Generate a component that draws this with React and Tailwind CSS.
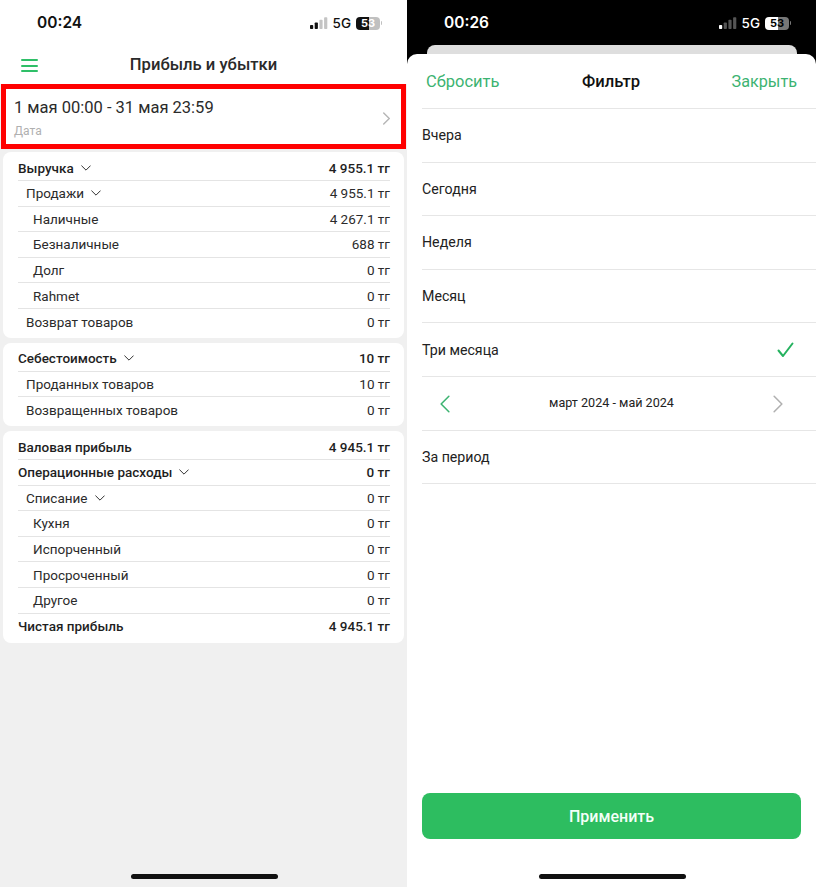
const revenue = [
    { label: 'Выручка', value: '4 955.1 тг', level: 0, bold: true, open: true },
    { label: 'Продажи', value: '4 955.1 тг', level: 1, open: true },
    { label: 'Наличные', value: '4 267.1 тг', level: 2 },
    { label: 'Безналичные', value: '688 тг', level: 2 },
    { label: 'Долг', value: '0 тг', level: 2 },
    { label: 'Rahmet', value: '0 тг', level: 2 },
    { label: 'Возврат товаров', value: '0 тг', level: 1 },
];

const cost = [
    { label: 'Себестоимость', value: '10 тг', level: 0, bold: true, open: true },
    { label: 'Проданных товаров', value: '10 тг', level: 1 },
    { label: 'Возвращенных товаров', value: '0 тг', level: 1 },
];

const profit = [
    { label: 'Валовая прибыль', value: '4 945.1 тг', level: 0, bold: true },
    { label: 'Операционные расходы', value: '0 тг', level: 0, bold: true, open: true },
    { label: 'Списание', value: '0 тг', level: 1, open: true },
    { label: 'Кухня', value: '0 тг', level: 2 },
    { label: 'Испорченный', value: '0 тг', level: 2 },
    { label: 'Просроченный', value: '0 тг', level: 2 },
    { label: 'Другое', value: '0 тг', level: 2 },
    { label: 'Чистая прибыль', value: '4 945.1 тг', level: 0, bold: true },
];

const filters = ['Вчера', 'Сегодня', 'Неделя', 'Месяц'];

function Signal({ on, off, active }) {
    return (
        <svg width="18" height="12" viewBox="0 0 18 12">
            {[0, 1, 2, 3].map((i) => (
                <rect key={i} x={i * 4.7} y={8 - i * 2.6} width="3.2" height={4 + i * 2.6} rx="0.8" fill={i < active ? on : off} />
            ))}
        </svg>
    );
}

function StatusBar({ time, dark }) {
    return (
        <div className={`flex items-center h-[45px] pt-px pl-[37px] pr-[25px] font-['Inter',sans-serif] ${dark ? 'text-white' : 'text-[#111]'}`}>
            <span className="text-[15.5px] font-semibold">{time}</span>
            <div className="ml-auto flex items-center">
                {dark ? <Signal on="#fff" off="#555" active={1} /> : <Signal on="#111" off="#c4c4c4" active={2} />}
                <span className="ml-[5px] text-[13.5px] font-medium">5G</span>
                <div
                    className={`ml-[5px] w-[24px] h-[13px] rounded-[4px] flex items-center justify-center text-[11px] font-bold leading-none ${
                        dark
                            ? 'text-black bg-[linear-gradient(to_right,#fff_55%,#777_55%)]'
                            : 'text-white bg-[linear-gradient(to_right,#111_55%,#c0c0c0_55%)]'
                    }`}
                >
                    53
                </div>
                <div className={`ml-px w-px h-[4px] rounded-r ${dark ? 'bg-[#777]' : 'bg-[#c0c0c0]'}`} />
            </div>
        </div>
    );
}

function Chevron({ dir = 'right', color = '#b5b5b5', size = 14, stroke = 1.5 }) {
    const paths = {
        right: 'M4 1l6 6-6 6',
        left: 'M10 1L4 7l6 6',
        down: 'M1 4l6 6 6-6',
    };
    return (
        <svg width={size} height={size} viewBox="0 0 14 14" fill="none" stroke={color} strokeWidth={stroke} strokeLinecap="round" strokeLinejoin="round">
            <path d={paths[dir]} />
        </svg>
    );
}

function ReportCard({ rows }) {
    const indent = ['pl-0', 'pl-2', 'pl-[15px]'];
    return (
        <div className="mx-[3px] mb-[4.5px] bg-white rounded-lg pl-[15px] pr-[14px] py-[3.5px]">
            {rows.map((row, i) => (
                <div
                    key={row.label}
                    className={`h-[25.6px] flex items-center text-[13.5px] ${indent[row.level]} ${
                        i < rows.length - 1 ? 'border-b border-[#e4e4e4]' : ''
                    } ${row.bold ? 'font-medium text-[#1f1f1f]' : 'text-[#2b2b2b]'}`}
                >
                    <span>{row.label}</span>
                    {row.open && (
                        <span className="ml-[7px]">
                            <Chevron dir="down" color="#333" size={10} stroke={1.4} />
                        </span>
                    )}
                    <span className="ml-auto">{row.value}</span>
                </div>
            ))}
        </div>
    );
}

function HomeBar() {
    return <div className="w-[147px] h-[5px] rounded-full bg-[#111]" />;
}

export default function App() {
    return (
        <div className="flex w-[816px] h-[887px] bg-white font-['Roboto',sans-serif] overflow-hidden">
            <div className="w-[407px] h-full flex flex-col bg-[#f0f0f0]">
                <div className="bg-white">
                    <StatusBar time="00:24" />
                    <div className="relative h-[39px] pt-[2px] flex items-center justify-center">
                        <div className="absolute left-[21px] top-[14px] flex flex-col gap-[3.5px]">
                            <div className="w-[17px] h-[2px] rounded bg-[#2fbf68]" />
                            <div className="w-[17px] h-[2px] rounded bg-[#2fbf68]" />
                            <div className="w-[17px] h-[2px] rounded bg-[#2fbf68]" />
                        </div>
                        <span className="text-[16.6px] font-medium text-[#2a2a2a]">Прибыль и убытки</span>
                    </div>
                </div>

                <div className="mx-px mb-[3px] h-[65px] pt-[3px] border-[5px] border-[#ff0000] bg-white flex items-center pl-[8px] pr-[8px]">
                    <div className="flex-1">
                        <div className="text-[16.5px] leading-[20px] text-[#2b2b2b]">1 мая 00:00 - 31 мая 23:59</div>
                        <div className="mt-[6px] text-[12px] leading-[14px] text-[#b0b0b0]">Дата</div>
                    </div>
                    <Chevron size={13} />
                </div>

                <ReportCard rows={revenue} />
                <ReportCard rows={cost} />
                <ReportCard rows={profit} />

                <div className="mt-auto mb-[8px] ml-px flex justify-center">
                    <HomeBar />
                </div>
            </div>

            <div className="w-[409px] h-full flex flex-col bg-black">
                <StatusBar time="00:26" dark />
                <div className="ml-[20px] mr-[19px] h-[9px] rounded-t-lg bg-[#dedede]" />
                <div className="flex-1 flex flex-col bg-white rounded-t-[10px] pl-[15px]">
                    <div className="h-[55px] pt-[2px] flex items-center justify-between border-b border-[#e6e6e6] pl-[4px] pr-[19px]">
                        <span className="text-[16.5px] text-[#3cb371]">Сбросить</span>
                        <span className="mr-[9px] text-[16.6px] font-medium text-[#111]">Фильтр</span>
                        <span className="text-[16.2px] text-[#3cb371]">Закрыть</span>
                    </div>

                    {filters.map((name) => (
                        <div key={name} className="h-[53.6px] pt-px flex items-center border-b border-[#e6e6e6] text-[14.2px] text-[#222]">
                            {name}
                        </div>
                    ))}

                    <div className="h-[53.6px] pt-px flex items-center justify-between border-b border-[#e6e6e6] pr-[22px] text-[14.2px] text-[#222]">
                        <span>Три месяца</span>
                        <svg width="17" height="16" viewBox="0 0 17 16" fill="none" stroke="#25b25f" strokeWidth="2" strokeLinecap="round" strokeLinejoin="round">
                            <path d="M1.5 8.5l4.5 5.5L15.5 1.5" />
                        </svg>
                    </div>

                    <div className="h-[53.6px] pt-px flex items-center justify-between border-b border-[#e6e6e6] pl-[14px] pr-[29px] text-[12.6px] text-[#222]">
                        <Chevron dir="left" color="#3cb371" size={18} stroke={1.2} />
                        <span>март 2024 - май 2024</span>
                        <Chevron dir="right" color="#b0b0b0" size={18} stroke={1.2} />
                    </div>

                    <div className="h-[53.6px] pt-px flex items-center border-b border-[#e6e6e6] text-[14.2px] text-[#222]">За период</div>

                    <div className="mt-auto mr-[15px] h-[46px] pt-px rounded-lg bg-[#2dbd60] flex items-center justify-center text-[16px] font-medium text-[#f4fff8]">
                        Применить
                    </div>
                    <div className="mt-[35px] mb-[8px] mr-[14px] flex justify-center">
                        <HomeBar />
                    </div>
                </div>
            </div>
        </div>
    );
}
